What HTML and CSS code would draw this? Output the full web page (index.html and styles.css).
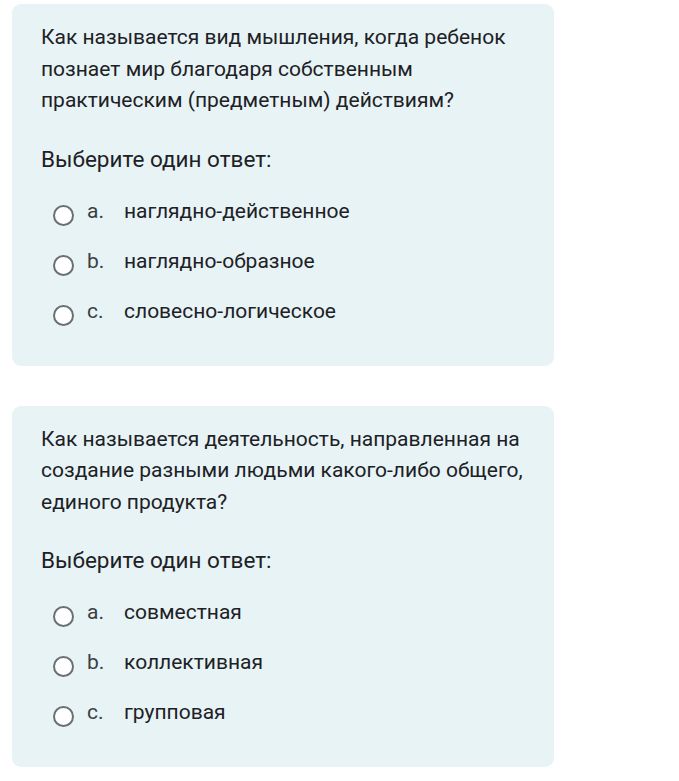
FILE: index.html
```html
<!DOCTYPE html>
<html lang="ru">
<head>
    <meta charset="UTF-8">
    <meta name="viewport" content="width=device-width, initial-scale=1.0">
    <title>Тест</title>
    <link rel="stylesheet" href="styles.css">
</head>
<body>

    <!-- Вопрос 1 -->
    <div class="que">
        <p class="qtext">Как называется вид мышления, когда ребенок познает мир благодаря собственным практическим (предметным) действиям?</p>
        <div class="prompt">Выберите один ответ:</div>
        <div class="answer">
            <label class="opt"><span class="radio"></span><span class="num">a.</span>наглядно-действенное</label>
            <label class="opt"><span class="radio"></span><span class="num">b.</span>наглядно-образное</label>
            <label class="opt"><span class="radio"></span><span class="num">c.</span>словесно-логическое</label>
        </div>
    </div>

    <!-- Вопрос 2 -->
    <div class="que">
        <p class="qtext">Как называется деятельность, направленная на создание разными людьми какого-либо общего, единого продукта?</p>
        <div class="prompt">Выберите один ответ:</div>
        <div class="answer">
            <label class="opt"><span class="radio"></span><span class="num">a.</span>совместная</label>
            <label class="opt"><span class="radio"></span><span class="num">b.</span>коллективная</label>
            <label class="opt"><span class="radio"></span><span class="num">c.</span>групповая</label>
        </div>
    </div>

</body>
</html>
```

FILE: styles.css
```css
body {
    margin: 0;
    padding: 4px 12px;
    background: #ffffff;
    font-family: Roboto, "Noto Sans", sans-serif;
    color: #1d2125;
}
.que {
    width: 542px;
    box-sizing: border-box;
    background: #e7f3f5;
    border-radius: 9px;
    padding: 18px 29px 30px;
    margin-bottom: 40px;
}
.qtext {
    margin: 0;
    font-size: 21px;
    line-height: 31.5px;
}
.prompt {
    margin-top: 26px;
    font-size: 22.5px;
    line-height: 33px;
}
.answer {
    margin-top: 10px;
    padding-left: 12px;
}
.opt {
    display: flex;
    align-items: center;
    height: 50px;
    font-size: 21px;
}
.radio {
    width: 17px;
    height: 17px;
    border: 2px solid #6a6f74;
    border-radius: 50%;
    background: #fff;
    margin-top: 9px;
    margin-right: 13px;
    flex-shrink: 0;
}
.num {
    width: 37px;
    color: #3a3f44;
}
```
